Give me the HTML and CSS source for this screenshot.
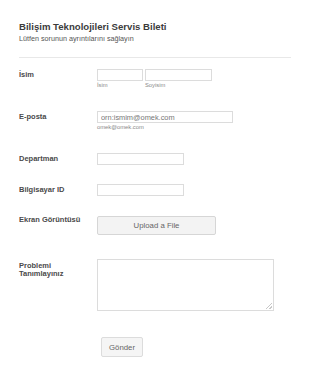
FILE: index.html
```html
<!DOCTYPE html>
<html lang="tr">
<head>
    <meta charset="UTF-8">
    <meta name="viewport" content="width=device-width, initial-scale=1.0">
    <title>Bilişim Teknolojileri Servis Bileti</title>
    <link rel="stylesheet" href="styles.css">
</head>
<body>
    <form class="form">
        <div class="head">
            <h1 class="title">Bilişim Teknolojileri Servis Bileti</h1>
            <p class="sub">Lütfen sorunun ayrıntılarını sağlayın</p>
        </div>

        <div class="row row_name">
            <label class="lbl">İsim</label>
            <div class="field two">
                <span class="part">
                    <input type="text" class="inp inp_first">
                    <span class="hint">İsim</span>
                </span>
                <span class="part">
                    <input type="text" class="inp inp_last">
                    <span class="hint">Soyisim</span>
                </span>
            </div>
        </div>

        <div class="row row_mail">
            <label class="lbl">E-posta</label>
            <div class="field">
                <input type="text" class="inp inp_mail" placeholder="orn:ismim@omek.com">
                <span class="hint">omek@omek.com</span>
            </div>
        </div>

        <div class="row row_dep">
            <label class="lbl">Departman</label>
            <div class="field"><input type="text" class="inp inp_mid"></div>
        </div>

        <div class="row row_pc">
            <label class="lbl">Bilgisayar ID</label>
            <div class="field"><input type="text" class="inp inp_mid"></div>
        </div>

        <div class="row row_file">
            <label class="lbl">Ekran Görüntüsü</label>
            <div class="field"><button type="button" class="upload">Upload a File</button></div>
        </div>

        <div class="row row_desc">
            <label class="lbl">Problemi Tanımlayınız</label>
            <div class="field"><textarea class="area"></textarea></div>
        </div>

        <div class="row row_send">
            <button type="button" class="send">Gönder</button>
        </div>
    </form>
</body>
</html>
```

FILE: styles.css
```css
* {margin: 0; padding: 0; box-sizing: border-box;}
body {background: #fff; font-family: "Liberation Sans", Arial, sans-serif; color: #555;}

.form {width: 291px; padding: 21px 0 0 19px;}
.head {width: 272px; padding-bottom: 14px; border-bottom: 1px solid #e8e8e8;}
.title {font-size: 9.6px; font-weight: bold; color: #3c3c3c; line-height: 12px;}
.sub {font-size: 7.2px; color: #555; line-height: 9px; margin-top: 1px;}

.row {display: flex; margin-top: 19px;}
.row_name {margin-top: 11px;}
.row_mail {margin-top: 22px;}
.row_dep {margin-top: 22px;}
.row_file {margin-top: 20px;}
.row_desc {margin-top: 24px;}
.row_send {margin-top: 26px; padding-left: 82px;}

.lbl {width: 78px; font-size: 7.5px; font-weight: bold; color: #4a4a4a; line-height: 8px; padding-top: 2px;}
.row_desc .lbl {width: 60px; margin-right: 18px; padding-top: 3px;}
.row_file .lbl {padding-top: 0;}

.field {display: flex; flex-direction: column;}
.two {flex-direction: row; gap: 2px;}
.part {display: flex; flex-direction: column;}

.inp {height: 12px; border: 1px solid #dcdcdc; background: #fff; font-family: inherit; font-size: 7.4px; color: #555; padding: 0 3px; outline: none;}
.inp::placeholder {color: #777;}
.inp_first {width: 46px;}
.inp_last {width: 67px;}
.inp_mail {width: 136px;}
.inp_mid {width: 87px;}
.hint {font-size: 5.8px; color: #888; line-height: 7px; margin-top: 1px;}

.upload {width: 119px; height: 19px; border: 1px solid #d6d6d6; border-radius: 2px; background: #f3f3f3; font-family: inherit; font-size: 7.8px; color: #666;}
/* 크기조절 손잡이는 연하게 직접 그림 */
.area {width: 177px; height: 52px; border: 1px solid #dcdcdc; resize: none; outline: none;
background: linear-gradient(135deg, transparent 0 48%, #c8c8c8 48% 58%, transparent 58% 74%, #c8c8c8 74% 84%, transparent 84%) no-repeat right 1px bottom 1px / 6px 6px;}
.send {width: 42px; height: 20px; border: 1px solid #dcdcdc; border-radius: 2px; background: #f5f5f5; font-family: inherit; font-size: 7.8px; color: #666;}
```
